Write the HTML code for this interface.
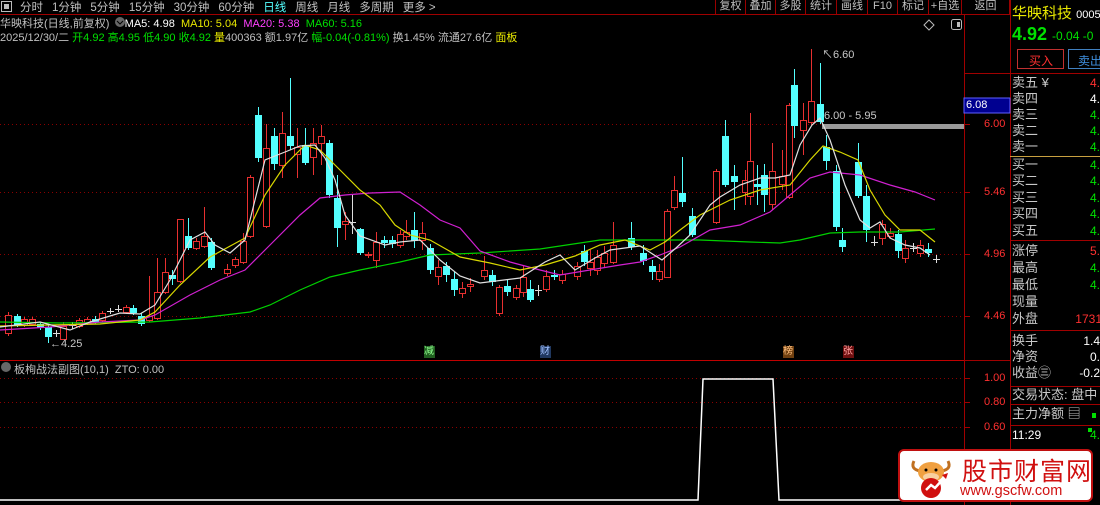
<!DOCTYPE html>
<html><head><meta charset="utf-8"><style>
*{margin:0;padding:0;box-sizing:border-box}
body{width:1100px;height:505px;background:#000;overflow:hidden;position:relative;font-family:"Liberation Sans","Noto Sans CJK SC",sans-serif;font-size:11px;color:#c0c0c0}
.a{position:absolute;white-space:nowrap}
.tb span{margin-right:9px}
.btn{position:absolute;top:0;height:14px;border-left:1px solid #900;font-size:11px;line-height:12px;text-align:center;color:#c0c0c0}
.r{position:absolute;left:1012px;font-size:13px;color:#c8c8c8;line-height:14px}
.v{position:absolute;right:0;font-size:12px;line-height:14px}
.g{color:#00e000}.rd{color:#ff3030}.w{color:#fff}.y{color:#e8e800}.m{color:#ff40ff}.c{color:#54ffff}
</style></head><body>
<svg class="a" style="left:0;top:0" width="1100" height="505" id="s">
<line x1="0" y1="14.5" x2="1010" y2="14.5" stroke="#a00000"/>
<line x1="964.5" y1="14" x2="964.5" y2="505" stroke="#a00000"/>
<line x1="1010.5" y1="0" x2="1010.5" y2="505" stroke="#a00000"/>
<line x1="0" y1="360.5" x2="964" y2="360.5" stroke="#c00000"/>
<line x1="964" y1="360.5" x2="1010" y2="360.5" stroke="#a00000"/>
<g stroke="#8a0000" stroke-dasharray="1,3">
<line x1="0" y1="124.5" x2="964" y2="124.5"/><line x1="0" y1="192.5" x2="964" y2="192.5"/><line x1="0" y1="254.5" x2="964" y2="254.5"/><line x1="0" y1="316.5" x2="964" y2="316.5"/>
<line x1="0" y1="378.5" x2="964" y2="378.5"/><line x1="0" y1="402.5" x2="964" y2="402.5"/><line x1="0" y1="427.5" x2="964" y2="427.5"/>
</g>
<g stroke="#a00000"><line x1="964" y1="124.5" x2="970" y2="124.5"/><line x1="964" y1="192.5" x2="970" y2="192.5"/><line x1="964" y1="254.5" x2="970" y2="254.5"/><line x1="964" y1="316.5" x2="970" y2="316.5"/><line x1="964" y1="378.5" x2="970" y2="378.5"/><line x1="964" y1="402.5" x2="970" y2="402.5"/><line x1="964" y1="427.5" x2="970" y2="427.5"/></g>
<rect x="822" y="124" width="142" height="5" fill="#9a9a9a"/>
<g id="cd"></g>
<g fill="none" stroke-width="1.2">
<polyline stroke="#00d000" points="0,322 60,323 150,322 200,318 250,312 270,305 300,290 330,277 360,270 400,262 430,255 480,253 540,249 600,240 650,240 700,240 750,242 780,243 800,240 830,233 860,232 900,232 935,229"/>
<polyline stroke="#d020d0" points="0,330 50,327 100,322 140,320 155,315 190,295 220,280 245,270 270,245 300,215 320,198 345,195 370,193 400,192 420,205 440,220 460,228 480,251 510,262 540,270 560,275 590,270 620,265 640,262 660,255 680,247 710,230 740,225 770,212 790,195 810,178 830,172 860,175 890,185 915,192 935,200"/>
<polyline stroke="#d8d800" points="0,326 50,325 100,324 140,320 155,312 180,285 210,257 245,238 265,195 285,165 305,145 320,150 340,170 360,190 380,205 395,225 410,235 430,240 460,257 490,263 520,270 545,265 575,256 600,245 625,240 650,250 665,242 680,230 700,215 730,200 760,190 790,185 810,160 823,146 840,152 858,160 870,190 885,215 900,230 920,230 935,242"/>
<polyline stroke="#e0e0e0" points="0,327 40,322 70,330 90,322 120,313 140,314 155,305 170,280 190,240 205,232 215,245 230,253 245,240 255,200 265,160 285,152 300,146 315,145 325,158 335,180 345,215 360,236 385,245 400,242 420,240 440,260 460,276 480,283 520,278 545,262 560,255 575,270 595,258 610,250 640,246 662,260 676,248 690,235 710,205 720,197 740,185 760,178 775,178 790,175 800,145 812,125 820,118 830,140 845,185 860,220 870,228 880,222 890,238 905,245 920,248 930,255"/>
</g>
<polyline fill="none" stroke="#fff" stroke-width="1.5" points="0,500 698,500 703,379 773,379 779,500 964,500"/>
<line x1="964" y1="73.5" x2="1100" y2="73.5" stroke="#a00000"/>
<line x1="1010" y1="156.5" x2="1100" y2="156.5" stroke="#c8a040"/>
<line x1="1010" y1="240.5" x2="1100" y2="240.5" stroke="#a00000"/>
<line x1="1010" y1="330.5" x2="1100" y2="330.5" stroke="#a00000"/>
<line x1="1010" y1="386.5" x2="1100" y2="386.5" stroke="#a00000"/>
<line x1="1010" y1="404.5" x2="1100" y2="404.5" stroke="#a00000"/>
<line x1="1010" y1="425.5" x2="1100" y2="425.5" stroke="#a00000"/>
<rect x="1017.5" y="49.5" width="46" height="19" fill="none" stroke="#c03030"/>
<rect x="1068.5" y="49.5" width="40" height="19" fill="none" stroke="#4080c0"/>
<rect x="964" y="98" width="46" height="15" fill="#000090" stroke="#6060ff"/>
<rect x="1092" y="413" width="4" height="5" fill="#00e000"/>
<rect x="1088" y="428" width="4" height="4" fill="#00e000"/>
<path d="M929 20 l5 5 l-5 5 l-5 -5z" fill="none" stroke="#bbb"/>
<rect x="951.5" y="19.5" width="10" height="10" rx="2" fill="none" stroke="#bbb"/><rect x="957" y="22" width="3" height="5" fill="#bbb"/>
<rect x="1.5" y="1.5" width="10" height="10" fill="none" stroke="#bbb"/><rect x="4" y="4" width="5" height="5" fill="#bbb"/>
<circle cx="120" cy="22" r="5" fill="#666"/><path d="M117 21 l3 3 l3 -3" stroke="#000" fill="none"/>
<circle cx="6" cy="367" r="5" fill="#666"/>
</svg>

<div class="a tb" style="left:20px;top:-1px;font-size:11.5px;color:#c0c0c0"><span>分时</span><span>1分钟</span><span>5分钟</span><span>15分钟</span><span>30分钟</span><span>60分钟</span><span class="c">日线</span><span>周线</span><span>月线</span><span>多周期</span><span>更多 &gt;</span></div>
<div class="btn" style="left:715px;width:30px">复权</div><div class="btn" style="left:745px;width:30px">叠加</div><div class="btn" style="left:775px;width:30px">多股</div><div class="btn" style="left:805px;width:31px">统计</div><div class="btn" style="left:836px;width:31px">画线</div><div class="btn" style="left:867px;width:30px">F10</div><div class="btn" style="left:897px;width:31px">标记</div><div class="btn" style="left:928px;width:33px">+自选</div><div class="btn" style="left:961px;width:49px;border-right:1px solid #900">返回</div>

<div class="a" style="left:0;top:15px">华映科技(日线,前复权)&nbsp;&nbsp;&nbsp;&nbsp;&nbsp;<span class="w">MA5: 4.98</span>&nbsp;&nbsp;<span class="y">MA10: 5.04</span>&nbsp;&nbsp;<span class="m">MA20: 5.38</span>&nbsp;&nbsp;<span class="g">MA60: 5.16</span></div>
<div class="a" style="left:0;top:29px">2025/12/30/二 <span class="g">开4.92 高4.95 低4.90 收4.92</span> <span class="y">量</span>400363 额1.97亿 <span class="g">幅-0.04(-0.81%)</span> 换1.45% 流通27.6亿 <span class="y">面板</span></div>

<div class="a" style="left:822px;top:46px;color:#c8c8c8">&#8598;6.60</div>
<div class="a" style="left:824px;top:110px;color:#c8c8c8">6.00 - 5.95</div>
<div class="a" style="left:50px;top:338px;color:#c8c8c8">&#8592;4.25</div>

<div class="a" style="left:424px;top:346px;width:11px;height:12px;background:#206020;color:#90ff90;font-size:10px;line-height:12px">减</div>
<div class="a" style="left:540px;top:346px;width:11px;height:12px;background:#203860;color:#a0c0ff;font-size:10px;line-height:12px">财</div>
<div class="a" style="left:783px;top:346px;width:11px;height:12px;background:#704010;color:#ffc080;font-size:10px;line-height:12px">榜</div>
<div class="a" style="left:843px;top:346px;width:11px;height:12px;background:#701010;color:#ffa0a0;font-size:10px;line-height:12px">张</div>

<div class="a" style="left:14px;top:361px">板栒战法副图(10,1)&nbsp;&nbsp;ZTO: 0.00</div>

<div class="a w" style="left:966px;top:99px;font-size:11px">6.08</div>
<div class="a rd" style="left:984px;top:118px">6.00</div>
<div class="a rd" style="left:984px;top:186px">5.46</div>
<div class="a rd" style="left:984px;top:248px">4.96</div>
<div class="a rd" style="left:984px;top:310px">4.46</div>
<div class="a rd" style="left:984px;top:372px">1.00</div>
<div class="a rd" style="left:984px;top:396px">0.80</div>
<div class="a rd" style="left:984px;top:421px">0.60</div>

<div class="a" style="left:1012px;top:2px;font-size:15px;color:#e8e800">华映科技 <span class="w" style="font-size:11px">0005</span></div>
<div class="a g" style="left:1012px;top:24px;font-size:18px;font-weight:bold">4.92 <span style="font-size:12px;font-weight:normal">-0.04 -0</span></div>
<div class="a rd" style="left:1029px;top:52px;font-size:12px">买入</div>
<div class="a" style="left:1078px;top:52px;font-size:12px;color:#4090e0">卖出</div>

<div style="position:absolute;left:1010px;top:0;width:90px;height:505px">
<div class="r" style="top:76px;left:2px">卖五 ¥</div><div class="v rd" style="top:76px">4.</div>
<div class="r" style="top:92px;left:2px">卖四</div><div class="v w" style="top:92px">4.</div>
<div class="r" style="top:108px;left:2px">卖三</div><div class="v g" style="top:108px">4.</div>
<div class="r" style="top:124px;left:2px">卖二</div><div class="v g" style="top:124px">4.</div>
<div class="r" style="top:140px;left:2px">卖一</div><div class="v g" style="top:140px">4.</div>
<div class="r" style="top:158px;left:2px">买一</div><div class="v g" style="top:158px">4.</div>
<div class="r" style="top:174px;left:2px">买二</div><div class="v g" style="top:174px">4.</div>
<div class="r" style="top:191px;left:2px">买三</div><div class="v g" style="top:191px">4.</div>
<div class="r" style="top:207px;left:2px">买四</div><div class="v g" style="top:207px">4.</div>
<div class="r" style="top:224px;left:2px">买五</div><div class="v g" style="top:224px">4.</div>
<div class="r" style="top:244px;left:2px">涨停</div><div class="v rd" style="top:244px">5.</div>
<div class="r" style="top:261px;left:2px">最高</div><div class="v g" style="top:261px">4.</div>
<div class="r" style="top:278px;left:2px">最低</div><div class="v g" style="top:278px">4.</div>
<div class="r" style="top:295px;left:2px">现量</div>
<div class="r" style="top:312px;left:2px">外盘</div><div class="v rd" style="top:312px;right:-2px">1731</div>
<div class="r" style="top:334px;left:2px">换手</div><div class="v w" style="top:334px">1.4</div>
<div class="r" style="top:350px;left:2px">净资</div><div class="v w" style="top:350px">0.</div>
<div class="r" style="top:366px;left:2px">收益㊂</div><div class="v w" style="top:366px">-0.2</div>
<div class="r" style="top:388px;left:2px">交易状态: 盘中</div>
<div class="r" style="top:407px;left:2px">主力净额 ▤</div>
<div class="r w" style="top:428px;left:2px;font-size:12px">11:29</div><div class="v g" style="top:428px">4.</div>
</div>

<div class="a" style="left:898px;top:449px;width:195px;height:53px;background:#fff;border:2px solid #c01010;border-radius:6px">
<svg class="a" style="left:6px;top:4px" width="50" height="44">
<path d="M8 6 q-4 8 6 10 M42 6 q4 8 -6 10" stroke="#c07020" stroke-width="3" fill="none"/>
<ellipse cx="25" cy="17" rx="13" ry="10" fill="#f0a040"/>
<ellipse cx="25" cy="22" rx="8" ry="4" fill="#f8d0a0"/>
<circle cx="20" cy="15" r="1.5" fill="#000"/><circle cx="30" cy="15" r="1.5" fill="#000"/>
<circle cx="25" cy="33" r="10" fill="#d01010"/>
<path d="M20 35 l5 -5 l4 3 l9 -10" stroke="#fff" stroke-width="2.5" fill="none"/>
<path d="M36 20 l6 -2 l-2 6z" fill="#d01010"/>
</svg>
<div class="a" style="left:62px;top:1px;font-size:25px;color:#d01010;letter-spacing:1px">股市财富网</div>
<div class="a" style="left:60px;top:32px;font-size:14.5px;color:#d01010">www.gscfw.com</div>
</div>

<script>
var C=[[8,1,315,333,312,336],[17,0,316,325,314,327],[24,1,319,325,317,327],[32,1,319,324,317,326],[40,0,324,328,322,330],[48,0,327,337,325,343],[56,2,333,333,330,337],[63,1,326,339,322,340],[72,2,325,325,322,329],[79,1,320,326,318,328],[87,1,319,323,317,325],[95,0,319,322,316,324],[102,1,313,320,311,322],[110,2,311,311,308,314],[118,2,309,309,305,312],[126,1,307,312,305,314],[133,0,308,313,305,315],[141,0,316,324,313,326],[149,1,316,320,276,322],[157,1,292,318,258,320],[165,1,272,292,258,294],[172,0,275,279,270,285],[180,1,219,281,219,283],[188,0,236,248,218,250],[196,1,241,248,238,250],[204,1,236,246,207,248],[211,0,242,268,238,270],[227,1,269,273,264,276],[235,1,259,265,257,268],[243,1,241,262,233,264],[250,1,177,236,175,238],[258,0,115,158,107,162],[266,1,148,226,124,228],[274,0,136,164,128,170],[282,1,133,165,112,178],[290,0,136,146,78,150],[297,1,147,154,128,178],[305,0,145,163,128,165],[313,1,143,157,128,175],[321,1,136,143,125,165],[329,0,143,195,140,198],[337,0,198,228,175,247],[345,1,221,224,212,240],[352,2,222,222,195,234],[360,0,229,253,228,255],[368,1,254,255,252,258],[376,1,242,260,232,268],[384,0,240,243,236,248],[392,0,240,244,236,248],[400,1,234,245,230,248],[406,1,232,236,220,240],[414,0,230,241,212,248],[422,1,233,240,222,250],[430,0,248,270,244,274],[438,1,267,276,260,285],[446,0,266,275,262,282],[454,0,279,290,272,296],[462,1,288,293,282,298],[470,1,284,286,278,292],[484,1,270,276,256,280],[492,0,275,282,270,286],[499,1,287,313,285,316],[507,0,286,292,280,296],[516,1,288,297,285,300],[523,1,277,292,265,297],[530,0,289,300,280,302],[538,2,290,290,285,296],[546,1,276,289,270,292],[554,0,275,277,270,280],[562,1,274,280,270,284],[577,1,266,276,262,280],[584,0,251,262,245,266],[590,1,262,268,250,276],[597,1,257,270,250,275],[604,1,253,263,246,268],[613,1,245,262,222,264],[631,0,238,247,222,250],[643,0,253,261,245,265],[652,0,266,272,260,280],[659,1,271,279,264,282],[667,1,211,277,209,278],[674,1,190,207,176,210],[682,0,193,202,157,207],[692,0,216,235,208,237],[716,1,171,222,169,224],[725,0,136,185,120,187],[734,0,176,182,165,210],[745,1,180,192,170,205],[750,1,161,196,113,205],[757,0,184,187,165,205],[764,0,175,195,164,212],[772,1,171,204,143,210],[782,1,176,184,150,190],[789,1,105,197,103,199],[794,0,85,126,69,138],[803,1,120,130,103,155],[811,1,101,122,49,125],[820,0,104,122,63,124],[826,0,147,161,135,170],[836,0,171,227,165,231],[842,0,240,247,228,252],[858,0,162,196,143,198],[866,0,196,230,185,242],[874,2,242,242,236,246],[882,1,224,238,220,245],[890,1,233,236,228,238],[898,0,234,251,230,258],[905,1,248,258,240,263],[913,2,248,248,243,252],[920,1,245,253,240,257],[928,0,249,253,243,257],[936,2,259,259,255,263]];
var g=document.getElementById('cd'),h='';
C.forEach(function(c){var x=c[0],t=c[2],b=c[3];
if(c[1]==2){h+='<line x1="'+x+'.5" y1="'+c[4]+'" x2="'+x+'.5" y2="'+c[5]+'" stroke="#ddd"/><line x1="'+(x-3)+'" y1="'+t+'.5" x2="'+(x+4)+'" y2="'+t+'.5" stroke="#ddd"/>';return;}
var col=c[1]?'#e83030':'#54ffff';
h+='<line x1="'+x+'.5" y1="'+c[4]+'" x2="'+x+'.5" y2="'+c[5]+'" stroke="'+col+'"/>';
if(c[1])h+='<rect x="'+(x-3)+'.5" y="'+t+'.5" width="6" height="'+Math.max(1,b-t)+'" fill="#000" stroke="'+col+'"/>';
else h+='<rect x="'+(x-3)+'" y="'+t+'" width="7" height="'+Math.max(2,b-t)+'" fill="'+col+'"/>';});
g.innerHTML=h;
</script>
</body></html>
